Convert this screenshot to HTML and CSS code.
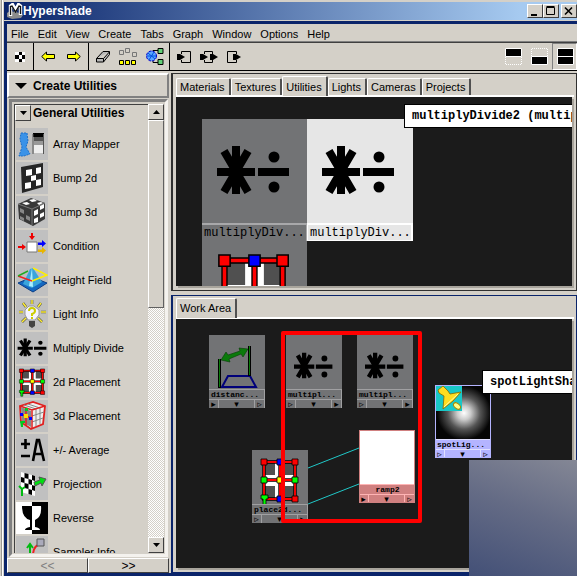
FILE: index.html
```html
<!DOCTYPE html>
<html lang="en">
<head>
<meta charset="utf-8">
<title>Hypershade</title>
<link rel="stylesheet" href="styles.css">
</head>
<body>
<svg class="defs" aria-hidden="true">
  <symbol id="muldiv" viewBox="0 0 105 105" overflow="visible">
    <path d="M34 27V75M15 53H53M56 53H87" stroke="#000" stroke-width="8"/>
    <path d="M22 32L46 73M46 32L22 73" stroke="#000" stroke-width="8"/>
    <circle cx="72" cy="38" r="5.5"/><circle cx="72" cy="68" r="5.5"/>
  </symbol>
  <symbol id="place" viewBox="0 0 56 56" overflow="visible">
    <path fill="#505050" stroke="#000" d="M12 12H43V49H12Z"/>
    <path fill="#fff" d="M23 13H33V25H42V36H33V48H23V36H13V25H23Z"/>
    <path stroke="#000" stroke-width="3.4" fill="none" d="M12 12H43V49H12ZM28 12V49M12 30H43"/>
    <path stroke="#f00" stroke-width="1.9" fill="none" d="M12 12H43V49H12ZM28 12V49M12 30H43"/>
    <g stroke="#000" stroke-width=".8">
      <path fill="#f00" d="M9 9h6v6H9zM40 9h6v6h-6zM40 46h6v6h-6z"/>
      <path fill="#00f" d="M25 9h6v6h-6zM25 46h6v6h-6z"/>
      <path fill="#0f0" d="M9 27h6v6H9zM40 27h6v6h-6zM9 45h7v4h-2v6h-3v-6H9z"/>
      <path fill="#ff0" d="M25 27h6v6h-6z"/>
    </g>
  </symbol>
</svg>

<div class="window">
  <header class="titlebar">
    <svg class="logo" width="16" height="16" viewBox="0 0 16 16"><path d="M0 10l3-2 10 2 3 2-2 3-9 1-5-2z" fill="#8c8c8c"/><path d="M3.500 13V3l2-1.500 3 5.500 3-5.500 2 1.500v9" fill="none" stroke="#fff" stroke-width="3.400"/><path d="M3.500 12V3.500L5 3l3.500 6L12 3l1.500.5V11" fill="none" stroke="#111" stroke-width="1.400"/></svg>
    <h1>Hypershade</h1>
    <div class="winbuttons">
      <button aria-label="Minimize"><svg width="10" height="10"><path d="M1 8h6v2H1z"/></svg></button>
      <button aria-label="Maximize"><svg width="10" height="10"><path d="M.5 1.5h8v7h-8zM.5 .5h8" fill="none" stroke="#000"/></svg></button>
      <button class="close" aria-label="Close"><svg width="10" height="10"><path d="M1 1.5l7 7M8 1.5l-7 7" stroke="#000" stroke-width="1.6"/></svg></button>
    </div>
  </header>

  <div class="client">
    <nav class="menubar">
      <button>File</button><button>Edit</button><button>View</button><button>Create</button><button>Tabs</button><button>Graph</button><button>Window</button><button>Options</button><button>Help</button>
    </nav>

    <div class="toolbar">
      <div class="group">
        <button aria-label="Toggle bins"><svg width="12" height="12" viewBox="0 0 12 12" shape-rendering="crispEdges"><path fill="#fff" d="M1 1h10v10H1z"/><path d="M5 1h3v3H5zM1 4h4v4H1zM8 4h3v4H8zM5 8h3v3H5z"/></svg></button>
      </div>
      <div class="group">
        <button aria-label="Back"><svg width="14" height="12" viewBox="0 0 14 12"><path d="M.7 5.500L5.500 1v2.500h8v4h-8V10z" fill="#ff0" stroke="#000"/></svg></button>
        <button aria-label="Forward"><svg width="14" height="12" viewBox="0 0 14 12"><path d="M13.300 5.500L8.500 1v2.500h-8v4h8V10z" fill="#ff0" stroke="#000"/></svg></button>
      </div>
      <div class="group">
        <button aria-label="Clear graph"><svg width="14" height="12" viewBox="0 0 14 12"><path d="M.5 7.500L7 .5h6.500v3L7.500 11H.5zM.5 7.500H7.500L13.500 .8M7.500 7.500V11" fill="#b8b8b8" stroke="#000"/></svg></button>
        <button aria-label="Rearrange graph"><svg width="18" height="17" viewBox="0 0 18 17"><path d="M.5 2.500h4v4h-4zM6.500.5h4v4h-4zM13.500 4.500h4v4h-4z" fill="#d4d0c8" stroke="#777"/><path d="M.5 12.500h4v4h-4zM6.500 12.500h4v4h-4zM12.500 12.500h4v4h-4z" fill="#ff0" stroke="#000"/></svg></button>
        <button aria-label="Graph materials"><svg width="18" height="17" viewBox="0 0 18 17"><path d="M7 5V2.500h5M7 10v4.500h5" fill="none" stroke="#000"/><circle cx="5.500" cy="8" r="5" fill="#5aa6ff" stroke="#00c" stroke-dasharray="3 1"/><path d="M2 5l7 6M8 4l-5 8M1 8h9" stroke="#0050e0"/><path d="M12 .5h5v5h-5zM12 11.500h5v5h-5z" fill="#62cf77" stroke="#000"/></svg></button>
      </div>
      <div class="group last">
        <button aria-label="Input connections"><svg width="14" height="12" viewBox="0 0 14 12"><path d="M4.500 3V.5h9v11h-9V9M0 6h4" fill="none" stroke="#000"/><path d="M0 3h3l5 3-5 3H0z"/></svg></button>
        <button aria-label="Input and output connections"><svg width="18" height="12" viewBox="0 0 18 12"><path d="M4.500 3V.5h8V3M4.500 9v2.500h8V9" fill="none" stroke="#000"/><path d="M0 3h3l5 3-5 3H0zM10 3h3l5 3-5 3h-3z"/></svg></button>
        <button aria-label="Output connections"><svg width="14" height="12" viewBox="0 0 14 12"><path d="M9.500 3V.5h-9v11h9V9" fill="none" stroke="#000"/><path d="M6 3h3l5 3-5 3H6z"/></svg></button>
      </div>
      <div class="views">
        <button aria-label="Top tabs only"><svg width="17" height="17"><path d="M.5.500h16v8H.5z" stroke="#fff"/><path d="M.5 9v7.500h16V9" fill="none" stroke="#fff" stroke-dasharray="1 1"/></svg></button>
        <button aria-label="Bottom tabs only"><svg width="17" height="17"><path d="M.5 8.500h16v8H.5z" stroke="#fff"/><path d="M.5 8V.5h16V8" fill="none" stroke="#fff" stroke-dasharray="1 1"/></svg></button>
        <button class="on" aria-label="Top and bottom tabs"><svg width="17" height="17"><path d="M.5.500h16v16H.5zM0 8.500h17" stroke="#fff"/></svg></button>
      </div>
    </div>

    <div class="workspace">
      <aside class="sidebar">
        <button class="sidehead"><svg width="12" height="6"><path d="M0 0h12L6 6z"/></svg>Create Utilities</button>
        <div class="bin">
          <div class="binlist">
            <h2><button aria-label="Collapse"><svg width="7" height="4"><path d="M0 0h7L3.500 4z"/></svg></button>General Utilities</h2>
            <ul>
              <li><button><svg viewBox="0 0 32 32"><path d="M5 5h6l1 8-2 6 4 7-6 2H3l3-9-2-8z" fill="#3a92e8" stroke="#1c6fc8" stroke-dasharray="2 1"/><path d="M17 5h11v4H17z"/><path d="M18 9h9v4h-9z" fill="#555"/><path d="M18 13h9v4h-9z" fill="#999"/><path d="M18 17h9v8h-9z" fill="#eee"/><path d="M17 6v20M27.500 6v20" stroke="#555"/></svg>Array Mapper</button></li>
              <li><button><svg viewBox="0 0 32 32"><path d="M5 5L27 1V25L6 31z" fill="#262626"/><path d="M10 8l6-1v6l-6 1zM20 6l5-1v6l-5 1zM15 14l5-1v5l-5 1zM9 21l6-1v6l-6 1zM20 18l5-1v6l-5 1z" fill="#fff"/></svg>Bump 2d</button></li>
              <li><button><svg viewBox="0 0 32 32"><path d="M2 8L15 2l14 5v16L17 30 3 23z" fill="#383838"/><path d="M2 8l14 5 13-6M16 13v16" stroke="#777" fill="none"/><path d="M13 4l5-1 3 2-5 1zM6 7l5-1 3 2-4 1zM21 7l4-1 2 1-4 2zM18 15l4-2v5l-4 2zM24 18l4-2v4l-4 2zM18 23l4-2v5l-4 1zM24 10l4-2v4l-4 2z" fill="#fff"/><path d="M4 12l4 2v4l-4-2zM10 19l4 2v4l-4-2zM4 20l4 2v3l-4-2z" fill="#888"/></svg>Bump 3d</button></li>
              <li><button><svg viewBox="0 0 32 32"><path d="M11 12h10v10H11z" fill="#fff" stroke="#777"/><path d="M16 3v5M2 17h6" stroke="#e00" stroke-width="2"/><path d="M13 6h6l-3 4zM6 14l4 3-4 3z" fill="#e00"/><path d="M22 12.500h4V10l4 3.500-4 3.500v-2h-4z" fill="#00f"/><path d="M22 19.500h4V17l4 3.500-4 3.500v-2h-4z" fill="#e8b500"/></svg>Condition</button></li>
              <li><button><svg viewBox="0 0 32 32"><path d="M2 19l14-6 15 6-14 9z" fill="#1467c0" stroke="#0c3f86"/><path d="M7 20L14 5l3-1 9 14-10 6z" fill="#3aa5dc"/><path d="M16 4l-3 18 4 1z" fill="#aef"/><path d="M2 12l14 5" stroke="#e22" stroke-width="1.500"/><path d="M2 12l10-5" stroke="#2a2" stroke-width="1.500"/><path d="M17 4l14 7-15 6" stroke="#fe0" stroke-width="1.500" fill="none"/></svg>Height Field</button></li>
              <li><button><svg viewBox="0 0 32 32"><path d="M16 2v4M7 5l3 4M25 5l-3 4M3 14h4M25 14h5M6 24l4-4M26 24l-4-4" stroke="#554" stroke-width="2.600"/><path d="M16 2v4M7 5l3 4M25 5l-3 4M3 14h4M25 14h5M6 24l4-4M26 24l-4-4" stroke="#fe3" stroke-width="1.500"/><path d="M12 22l-3-5V12l4-4h5l5 4v5l-4 5z" fill="#f4f4ff" stroke="#999"/><path d="M13 13q0-3 3-3t3 3q0 2-3 3v2M16 19v2" stroke="#cc0" stroke-width="2" fill="none"/><path d="M13 23h6v5l-3 2-3-2z" fill="#444"/></svg>Light Info</button></li>
              <li><button><svg viewBox="11 9 80 87" preserveAspectRatio="none"><use href="#muldiv" width="105" height="105"/></svg>Multiply Divide</button></li>
              <li><button><svg viewBox="4 4 47 54" preserveAspectRatio="none"><use href="#place" width="56" height="56"/></svg>2d Placement</button></li>
              <li><button><svg viewBox="0 0 32 32"><path d="M4 6L17 2l12 4-2 18-12 5L5 22z" fill="#eee" stroke="#e02020" stroke-width="1.800"/><path d="M20 9v17M24 8v16M16 16l12-4M16 22l11-4M8 5l12 4M12 4l12 4" stroke="#888" fill="none"/><path d="M5 7l10 4v16l-9-5z" fill="#888"/><path d="M4 6l12 4 13-4M16 10v18M10 9v16M5 14l10 4" stroke="#e02020" stroke-width="1.500" fill="none"/><path d="M4 13h3v3H4zM13 17h3v3h-3z" fill="#00f"/><path d="M9 8h3v3H9zM4 21h5v2H7v4H5z" fill="#0c2"/><path d="M8 14h4v4H8z" fill="#fd0"/></svg>3d Placement</button></li>
              <li><button><svg viewBox="0 0 32 32"><path d="M5 10h9M9.500 5v10M5 22h9M17 27l4-21h2l5 21M19 20h8" fill="none" stroke="#000" stroke-width="2.600"/></svg>+/- Average</button></li>
              <li><button><svg viewBox="0 0 32 32"><path d="M5 4l14 4v20L5 24z" fill="#fff"/><path d="M8.500 5l4 1v5l-4-1zM16 7l3 1v5l-3-1zM5 9l3.500 1v5L5 14zM12.500 11l3.500 1v5l-3.500-1zM8.500 15l4 1v5l-4-1zM16 17l3 1v5l-3-1zM12.500 21l3.500 1v5l-3.500-1z"/><path d="M18 14l6-2-1-3 7 2-4 7-1-3-6 3z" fill="#0d1" stroke="#555"/><path d="M3 18l3 3 3-2M6 20v8" stroke="#0b1" stroke-width="2" fill="none"/></svg>Projection</button></li>
              <li><button><svg viewBox="0 0 32 32"><path d="M0 0h16v32H0z" fill="#fff"/><path d="M16 0h16v32H16z"/><path d="M6 4h10v24H9q0-2 5-3v-7Q6 16 6 4z"/><path d="M16 4h9q1 11-6 14v7q5 1 5 3h-8z" fill="#fff"/></svg>Reverse</button></li>
              <li><button><svg viewBox="0 0 32 32"><path d="M14 24V9M11 12l3-4 3 4" stroke="#0b1" stroke-width="2" fill="none"/><path d="M17 20q0-11 8-12" stroke="#e22" stroke-width="2" fill="none"/><path d="M21 3h7v7h-7z" fill="#aab" stroke="#555"/></svg>Sampler Info</button></li>
            </ul>
          </div>
          <div class="scrollbar">
            <button aria-label="Scroll up"><svg width="7" height="4"><path d="M0 4h7L3.500 0z"/></svg></button>
            <div class="track"><div class="thumb"></div></div>
            <button aria-label="Scroll down"><svg width="7" height="4"><path d="M0 0h7L3.500 4z"/></svg></button>
          </div>
        </div>
        <div class="pager"><button disabled>&lt;&lt;</button><button>&gt;&gt;</button></div>
      </aside>

      <main class="panels">
        <section class="panel">
          <div class="tabs">
            <button>Materials</button><button>Textures</button><button class="active">Utilities</button><button>Lights</button><button>Cameras</button><button>Projects</button>
          </div>
          <div class="canvas">
            <div class="swatches">
              <figure class="swatch"><svg viewBox="0 0 105 104"><use href="#muldiv" width="105" height="105"/></svg><figcaption>multiplyDiv...</figcaption></figure>
              <figure class="swatch selected"><svg viewBox="0 0 105 104"><use href="#muldiv" width="105" height="105"/></svg><figcaption>multiplyDiv...</figcaption></figure>
              <figure class="swatch"><svg viewBox="0 3 105 104"><use href="#place" width="105" height="105"/></svg></figure>
            </div>
            <div class="tip tip-top">multiplyDivide2 (multip</div>
          </div>
        </section>

        <section class="panel work">
          <div class="tabs"><button class="active">Work Area</button></div>
          <div class="canvas">
            <svg class="wires"><path d="M132 149L183 129M132 185L183 165" stroke="#20c8c8"/></svg>
            <div class="node n-distance"><svg viewBox="0 0 56 54"><path d="M13 52L19 41H41L47 52z" fill="none" stroke="#00007a" stroke-width="2"/><path d="M10.500 24V53M40.500 11V41" stroke="#000" stroke-width="3"/><path d="M10.500 24V52M40.500 11V40" stroke="#0a7a0a"/><path d="M12 25l5-8 2 3 12-4-1-3 9 1-5 8-2-3-12 5 1 3z" fill="#0a7a0a" stroke="#063c06" stroke-width=".6"/></svg><span class="name">distanc...</span><span class="ports"><i>▸</i><i>▾</i><i>▹</i></span></div>
            <div class="node n-mul1"><svg viewBox="0 -6 105 101"><use href="#muldiv" width="105" height="105"/></svg><span class="name">multipl...</span><span class="ports"><i>▹</i><i>▾</i><i>▸</i></span></div>
            <div class="node n-mul2"><svg viewBox="0 -6 105 101"><use href="#muldiv" width="105" height="105"/></svg><span class="name">multipl...</span><span class="ports"><i>▹</i><i>▾</i><i>▸</i></span></div>
            <div class="node n-spot"><svg viewBox="0 0 56 54"><defs><radialGradient id="glow" gradientUnits="userSpaceOnUse" cx="29" cy="28" r="27"><stop offset="0" stop-color="#fff"/><stop offset=".25" stop-color="#ccc"/><stop offset=".6" stop-color="#555"/><stop offset="1" stop-color="#050505"/></radialGradient></defs><path d="M0 0h56v54H0z" fill="url(#glow)"/><path d="M1 1h26v25H1z" fill="#19c8c8"/><path d="M3 5l5-4 5 5 2 3 11-2-8 9-10 8 1-13-5-3z" fill="#fd2" stroke="#860" stroke-width=".8"/><path d="M9 22l14-13" stroke="#ffa"/><ellipse cx="22" cy="21" rx="4" ry="2.500" fill="#ff8" stroke="#a80" transform="rotate(40 22 21)"/></svg><span class="name">spotLig...</span><span class="ports"><i>▹</i><i>▾</i><i>▹</i></span></div>
            <div class="node n-place"><svg viewBox="0 0 56 54"><use href="#place" width="56" height="56"/></svg><span class="name">place2d...</span><span class="ports"><i>▹</i><i>▾</i><i>▸</i></span></div>
            <div class="node n-ramp"><svg viewBox="0 0 56 54"><path d="M0 0h56v54H0z" fill="#fff"/></svg><span class="name">ramp2</span><span class="ports"><i>▸</i><i>▾</i><i>▹</i></span></div>
            <div class="marker"></div>
            <div class="tip tip-work">spotLightSha</div>
          </div>
        </section>
      </main>
    </div>
  </div>
  <div class="shade"></div>
</div>
</body>
</html>
```

FILE: styles.css
```css
* { box-sizing: border-box; }
body {
  margin: 0;
  font: 11px/14px "Liberation Sans", Arial, sans-serif;
  color: #000;
  background: #d4d0c8;
}
button {
  margin: 0;
  padding: 0;
  border: 0;
  background: none;
  font: inherit;
  color: inherit;
}
svg { display: block; flex: none; }
.defs { position: absolute; width: 0; height: 0; }

.window {
  position: relative;
  display: flex;
  flex-direction: column;
  height: 100vh;
  overflow: hidden;
  padding: 2px 0 0 4px;
  background: linear-gradient(90deg, #d4d0c8 1px, #9a9892 1px 2px, #fff 2px 3px, #d4d0c8 3px);
}
.titlebar {
  display: flex;
  align-items: center;
  height: 18px;
  padding-left: 3px;
  background: linear-gradient(90deg, #0a246a, #a6caf0 90%);
}
.titlebar h1 {
  flex: 1;
  margin: 0;
  font: bold 12px/16px "Liberation Sans", Arial, sans-serif;
  color: #fff;
}
.winbuttons { display: flex; }
.winbuttons button {
  display: flex;
  justify-content: center;
  align-items: center;
  width: 16px;
  height: 14px;
  background: #d4d0c8;
  border: 1px solid;
  border-color: #fff #404040 #404040 #fff;
}
.winbuttons .close { margin-left: 2px; }

.client {
  flex: 1;
  min-height: 0;
  display: flex;
  flex-direction: column;
  margin-top: 1px;
  border: solid #0a246a;
  border-width: 3px 0 3px 3px;
  background: #d4d0c8;
}
.menubar {
  display: flex;
  gap: 9px;
  height: 18px;
  padding: 3px 4px 0;
  border-bottom: 1px solid #808080;
}
.toolbar {
  display: flex;
  height: 29px;
  border-top: 1px solid #404040;
  border-bottom: 1px solid #000;
}
.group {
  display: flex;
  align-items: center;
  gap: 9px;
  padding: 0 7px;
  border-right: 1px solid #000;
}
.group:nth-child(2) { gap: 12px; }
.group:nth-child(3) { padding-right: 5px; }
.group.last { border: 0; }
.views {
  display: flex;
  align-items: center;
  margin-left: auto;
}
.views button {
  height: 27px;
  padding: 4px 4px 4px 5px;
}
.views .on {
  padding: 4px 2px 4px 4px;
  border: 1px solid;
  border-color: #808080 #fff #fff #808080;
}

.workspace {
  flex: 1;
  min-height: 0;
  display: flex;
  gap: 2px;
  padding-top: 2px;
}
.sidebar {
  flex: none;
  display: flex;
  flex-direction: column;
  width: 162px;
}
.sidehead {
  display: flex;
  align-items: center;
  gap: 6px;
  height: 25px;
  padding-left: 6px;
  border: 2px solid;
  border-color: #fff #808080 #808080 #fff;
  font: bold 12px/16px "Liberation Sans", Arial, sans-serif;
}
.bin {
  flex: 1;
  min-height: 0;
  display: flex;
  margin: 1px 1px 1px 2px;
  padding: 2px 1px 1px 2px;
  border: 3px solid;
  border-color: #808080 #f4f2ee #f4f2ee #808080;
}
.binlist {
  flex: 1;
  min-width: 0;
  overflow: hidden;
  border: solid #404040;
  border-width: 1px 0 0 1px;
}
.binlist h2 {
  display: flex;
  align-items: center;
  gap: 2px;
  height: 16px;
  margin: 0 0 7px;
  font: bold 12px/16px "Liberation Sans", Arial, sans-serif;
  white-space: nowrap;
}
.binlist h2 button, .scrollbar button {
  display: flex;
  flex: none;
  justify-content: center;
  align-items: center;
  width: 16px;
  height: 16px;
  background: #d4d0c8;
  border: 1px solid;
  border-color: #fff #404040 #404040 #fff;
}
.binlist ul {
  margin: 0 0 0 1px;
  padding: 0;
  list-style: none;
}
.binlist li { height: 34px; }
.binlist li button {
  display: flex;
  align-items: center;
  gap: 5px;
}
.binlist li svg {
  width: 32px;
  height: 32px;
  background: #c0c0c0;
}
.scrollbar {
  display: flex;
  flex-direction: column;
  width: 16px;
}
.track {
  flex: 1;
  background: repeating-conic-gradient(#fff 0 25%, #d4d0c8 0 50%) 0 0 / 2px 2px;
}
.thumb {
  height: 45%;
  background: #d4d0c8;
  border: 1px solid;
  border-color: #fff #606060 #606060 #fff;
}
.pager { display: flex; }
.pager button {
  flex: 1;
  height: 15px;
  border: 1px solid;
  border-color: #fff #404040 #404040 #fff;
  font-size: 12px;
  line-height: 12px;
}
.pager button:disabled { color: #808080; }

.panels {
  flex: 1;
  min-width: 0;
  display: grid;
  grid-template-rows: 218fr 279fr;
  gap: 4px;
}
.panel {
  display: flex;
  flex-direction: column;
  min-width: 0;
  min-height: 0;
  padding: 3px 2px 4px 3px;
  border: solid #303030;
  border-width: 1px 1px 1px 2px;
}
.panel.work { border-color: #0a246a; }
.tabs {
  display: flex;
  align-items: flex-end;
  height: 20px;
  border-bottom: 2px solid #fff;
}
.tabs button {
  height: 17px;
  padding: 0 4px 0 3px;
  border: solid;
  border-width: 1px 2px 0 1px;
  border-color: #fff #505050 #fff #fff;
  border-radius: 2px 2px 0 0;
}
.tabs .active {
  height: 20px;
  margin-bottom: -1px;
  background: #d4d0c8;
}
.canvas {
  position: relative;
  flex: 1;
  min-height: 0;
  overflow: hidden;
  background: #1b1b1b;
  box-shadow: 2px 2px 0 #a8a49c;
  margin-right: 2px;
}
.swatches {
  display: grid;
  grid-template-columns: 105px 106px;
  padding: 22px 0 0 26px;
}
.swatch {
  margin: 0;
  background: #727375;
}
.swatch svg { width: 105px; height: 104px; }
.swatch figcaption {
  height: 18px;
  padding-left: 2px;
  border: solid #a8a8aa;
  border-width: 2px 1px 0 0;
  font: 12px/16px "Liberation Mono", monospace;
  white-space: nowrap;
}
.swatch.selected { background: #e6e6e6; }
.selected figcaption {
  border: 1px solid #fff;
  border-width: 2px 2px 1px 1px;
}
.tip {
  position: absolute;
  height: 24px;
  padding-left: 7px;
  border: 1px solid #000;
  background: #fff;
  font: bold 12px/22px "Liberation Mono", monospace;
  white-space: nowrap;
}
.tip-top { left: 228px; top: 7px; }
.tip-work { left: 306px; top: 51px; }

.wires {
  position: absolute;
  inset: 0;
  width: 100%;
  height: 100%;
}
.node {
  --face: #727375;
  --edge: #a0a0a2;
  position: absolute;
  width: 56px;
  background: var(--face);
}
.node > svg { width: 56px; height: 54px; }
.name {
  display: block;
  height: 10px;
  padding-left: 2px;
  border: solid var(--edge);
  border-width: 1px 1px 0 0;
  font: bold 8px/9px "Liberation Mono", monospace;
  white-space: nowrap;
}
.ports {
  display: grid;
  grid-template-columns: 9px 1fr 9px;
  height: 9px;
  border: solid var(--edge);
  border-width: 1px 1px 0 0;
  text-align: center;
}
.ports i {
  height: 8px;
  font: bold 9px/8px "DejaVu Sans", sans-serif;
}
.ports i:nth-child(2) {
  border: solid var(--edge);
  border-width: 0 1px;
}
.n-distance { left: 33px; top: 16px; }
.n-mul1 { left: 110px; top: 16px; }
.n-mul2 { left: 181px; top: 16px; }
.n-spot { left: 259px; top: 66px; --face: #b4b4ff; --edge: #e0e0ff; outline: 1px solid #b4b4ff; outline-offset: -1px; }
.n-place { left: 76px; top: 131px; }
.n-ramp { left: 183px; top: 111px; --face: #d08080; --edge: #ffb4b4; outline: 1px solid #d08080; outline-offset: -1px; }
.n-ramp .name { text-align: center; }
.marker {
  position: absolute;
  left: 105px;
  top: 12px;
  width: 141px;
  height: 192px;
  border: 4px solid #f00;
  border-radius: 2px;
}

.shade {
  position: absolute;
  right: 0;
  bottom: 0;
  width: 108px;
  height: 116px;
  background: linear-gradient(200deg, #848795, #646b85 45%, #435077);
}
```
